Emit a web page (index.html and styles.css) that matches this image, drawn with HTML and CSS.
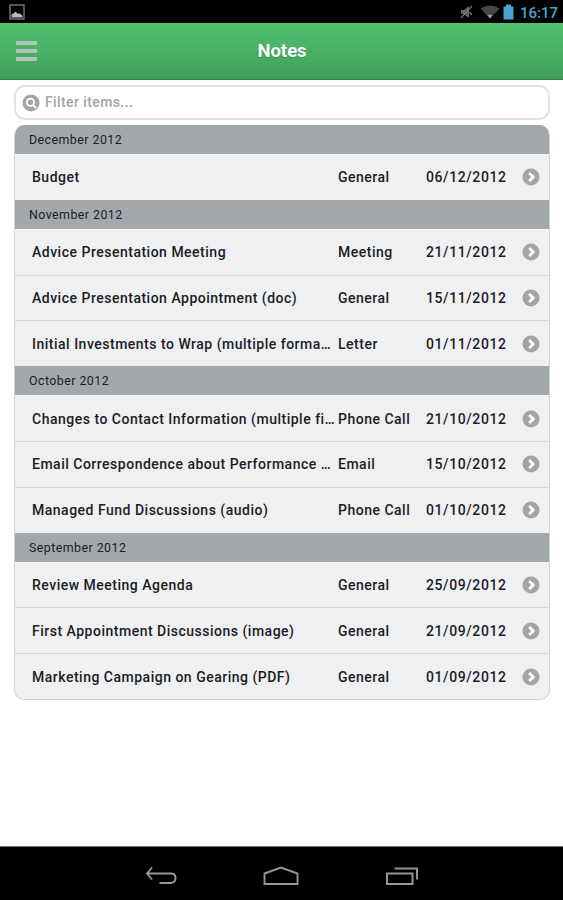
FILE: index.html
```html
<!DOCTYPE html>
<html lang="en">
<head>
    <meta charset="UTF-8">
    <meta name="viewport" content="width=device-width, initial-scale=1.0">
    <title>Notes</title>
    <link rel="stylesheet" href="styles.css">
</head>
<body>
    <svg class="defs" width="0" height="0">
        <symbol id="arrow" viewBox="0 0 18 18">
            <circle cx="9" cy="9" r="8.5" fill="#a3a4a4"/>
            <path d="M7.2 5 11.2 9l-4 4" fill="none" stroke="#fff" stroke-width="2.8"/>
        </symbol>
    </svg>

    <div class="container">
        <div class="statusbar">
            <svg class="picture" width="16" height="16" viewBox="0 0 16 16">
                <rect x="1" y="1" width="14" height="14" fill="none" stroke="#8c8c8c" stroke-width="1.2"/>
                <path d="M2.5 13.5v-3l2-1 2-2 2.5 2.5 1.5-.8 3 2.5v1.8z" fill="#b8b8b8"/>
            </svg>
            <div class="state">
                <svg class="mute" width="13" height="14" viewBox="0 0 13 14">
                    <path d="M1 5h3l5-4v12l-5-4H1z" fill="#666"/>
                    <path d="M1 13 12 1M9.5 7l2.5 3" stroke="#777" stroke-width="1.3"/>
                </svg>
                <svg class="wifi" width="20" height="14" viewBox="0 0 20 14">
                    <path d="M.5 3.5Q10-2.5 19.500 3.500L10 13.500z" fill="#464646"/>
                    <path d="M7.500 10.500Q10 8.500 12.500 10.500L10 13.500z" fill="#999"/>
                </svg>
                <svg class="battery" width="11" height="16" viewBox="0 0 11 16">
                    <path d="M3 .5h5v2h2.500v13H.5v-13H3z" fill="#48a6d0"/>
                </svg>
                <span class="clock">16:17</span>
            </div>
        </div><!-- statusbar -->

        <div class="header">
            <div class="menu"><span></span><span></span><span></span></div>
            <h1>Notes</h1>
        </div><!-- header -->

        <div class="content">
            <div class="filter">
                <svg width="18" height="18" viewBox="0 0 18 18">
                    <circle cx="9" cy="9" r="8.5" fill="#a3a4a4"/>
                    <circle cx="8.500" cy="8.300" r="3.600" fill="none" stroke="#fff" stroke-width="1.800"/>
                    <path d="m11 11 3 3" stroke="#fff" stroke-width="2.200"/>
                </svg>
                <span>Filter items...</span>
            </div>

            <ul class="list">
                <li class="divider">December 2012</li>
                <li class="item"><span class="title">Budget</span><span class="type">General</span><span class="date">06/12/2012</span><svg class="arrow"><use href="#arrow"/></svg></li>
                <li class="divider">November 2012</li>
                <li class="item"><span class="title">Advice Presentation Meeting</span><span class="type">Meeting</span><span class="date">21/11/2012</span><svg class="arrow"><use href="#arrow"/></svg></li>
                <li class="item"><span class="title">Advice Presentation Appointment (doc)</span><span class="type">General</span><span class="date">15/11/2012</span><svg class="arrow"><use href="#arrow"/></svg></li>
                <li class="item"><span class="title">Initial Investments to Wrap (multiple forma<span class="dots">...</span></span><span class="type">Letter</span><span class="date">01/11/2012</span><svg class="arrow"><use href="#arrow"/></svg></li>
                <li class="divider">October 2012</li>
                <li class="item"><span class="title">Changes to Contact Information (multiple fi<span class="dots">...</span></span><span class="type">Phone Call</span><span class="date">21/10/2012</span><svg class="arrow"><use href="#arrow"/></svg></li>
                <li class="item"><span class="title">Email Correspondence about Performance <span class="dots">...</span></span><span class="type">Email</span><span class="date">15/10/2012</span><svg class="arrow"><use href="#arrow"/></svg></li>
                <li class="item"><span class="title">Managed Fund Discussions (audio)</span><span class="type">Phone Call</span><span class="date">01/10/2012</span><svg class="arrow"><use href="#arrow"/></svg></li>
                <li class="divider">September 2012</li>
                <li class="item"><span class="title">Review Meeting Agenda</span><span class="type">General</span><span class="date">25/09/2012</span><svg class="arrow"><use href="#arrow"/></svg></li>
                <li class="item"><span class="title">First Appointment Discussions (image)</span><span class="type">General</span><span class="date">21/09/2012</span><svg class="arrow"><use href="#arrow"/></svg></li>
                <li class="item"><span class="title">Marketing Campaign on Gearing (PDF)</span><span class="type">General</span><span class="date">01/09/2012</span><svg class="arrow"><use href="#arrow"/></svg></li>
            </ul>
        </div><!-- content -->

        <div class="navbar">
            <svg width="32" height="20" viewBox="0 0 32 20">
                <path d="M7 1.500 2 7.500l5 6M2 7.500h24q4.500 0 4.500 4.500t-4.500 5H14.500" fill="none" stroke="#969696" stroke-width="1.900"/>
            </svg>
            <svg width="36" height="20" viewBox="0 0 36 20">
                <path d="M1.500 18V7.500L18 1.500l16.500 6V18z" fill="none" stroke="#969696" stroke-width="1.900"/>
            </svg>
            <svg width="34" height="20" viewBox="0 0 34 20">
                <path d="M2 7.500h25.500V18H2zM9.500 2.500H32V13.500" fill="none" stroke="#969696" stroke-width="2"/>
            </svg>
        </div><!-- navbar -->
    </div><!-- container -->
</body>
</html>
```
FILE: styles.css
```css
*{margin: 0;padding: 0;box-sizing: border-box;}
html, body{
    width: 100%;
    height: 100%;
}

body{
    font-family: Roboto, sans-serif;
    background: #fff;
    overflow: hidden;
}

ul, li{
    list-style: none;
}

.defs{
    display: none;
}

.container{
    display: flex;
    flex-direction: column;
    height: 100%;
}

.statusbar{
    display: flex;
    justify-content: space-between;
    align-items: center;
    height: 23px;
    padding: 1px 5px 0 9px;
    background: #000;
}

.state{
    display: flex;
    align-items: center;
}

.wifi{
    margin-left: 7px;
}

.battery{
    margin-left: 3px;
}

.clock{
    width: 38px;
    margin-left: 6px;
    font-size: 15px;
    font-weight: 500;
    line-height: 20px;
    padding-top: 1px;
    color: #48a6d0;
}

.header{
    display: grid;
    grid-template-columns: 1fr auto 1fr;
    align-items: center;
    height: 57px;
    padding: 0 15px 0 16px;
    background: linear-gradient(#50c16f, #419f5b);
    border-bottom: 1px solid #35894c;
}

.menu{
    display: flex;
    flex-direction: column;
    gap: 4px;
    width: 21px;
    margin-bottom: 1px;
}

.menu span{
    height: 4px;
    background: #b5c4ba;
}

h1{
    font-size: 18.500px;
    font-weight: 700;
    color: #fff;
    text-shadow: 0 1px 1px #3b8d52;
}

.content{
    flex: 1;
    padding: 5px 13px 0 14px;
}

.filter{
    display: flex;
    align-items: center;
    gap: 5px;
    height: 35px;
    padding: 0 6px 2px;
    border: 2px solid #e2e3e4;
    border-radius: 11px;
    font-size: 14px;
    font-weight: 500;
    letter-spacing: 0.4px;
    color: #a3a5a8;
}

.filter svg{
    margin-top: 2px;
}

.list{
    margin-top: 5px;
    border: 1px solid #d0d3d5;
    border-top: 0;
    border-radius: 10px;
    overflow: hidden;
    background: #eff0f2;
    color: #1b1c24;
}

.divider{
    height: 29px;
    padding-left: 14px;
    background: #a3a8ad;
    font-size: 12.400px;
    line-height: 29px;
    letter-spacing: 0.45px;
}

.item{
    display: grid;
    grid-template-columns: 306px 88px 96px 18px;
    align-items: center;
    height: 45.800px;
    padding-left: 17px;
    border-top: 1px solid #d5d8da;
    font-size: 14px;
    font-weight: 500;
    letter-spacing: 0.5px;
    white-space: nowrap;
}

.divider + .item{
    border-top-color: #f8f9fa;
}

.dots{
    letter-spacing: -0.8px;
}

.date{
    letter-spacing: 0.6px;
}

.arrow{
    width: 18px;
    height: 18px;
}

.navbar{
    display: flex;
    justify-content: center;
    align-items: center;
    gap: 86px;
    height: 54px;
    padding-top: 4px;
    background: #000;
    border-top: 1px solid #777;
}
```
